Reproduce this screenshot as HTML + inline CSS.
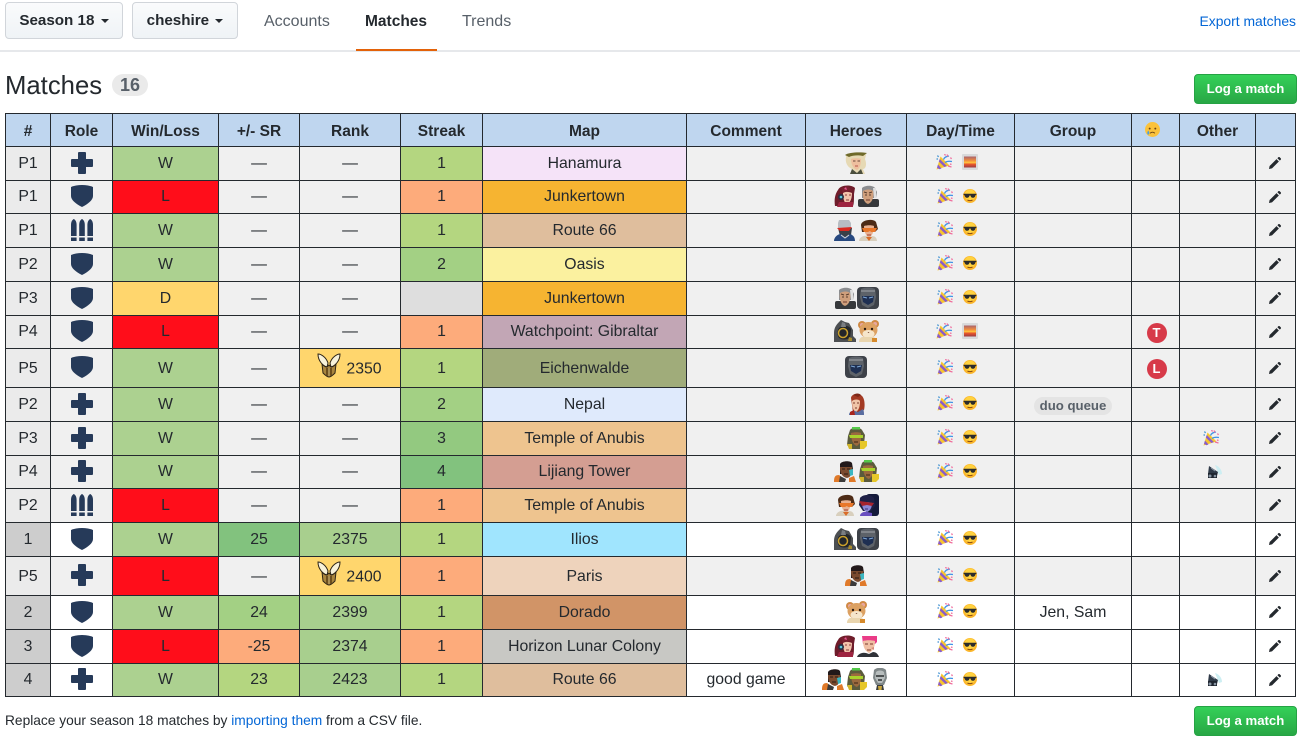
<!DOCTYPE html>
<html><head><meta charset="utf-8"><title>Matches</title>
<style>
*{box-sizing:border-box}
html,body{margin:0;padding:0;background:#fff}
body{width:1300px;height:741px;position:relative;overflow:hidden;font-family:"Liberation Sans",sans-serif;color:#24292e;font-size:16px}
.btn{position:absolute;border:1px solid #d1d5da;border-radius:4px;background:linear-gradient(#fafbfc,#eff3f6);font-weight:700;font-size:15.2px;line-height:36px;text-align:center;color:#24292e;white-space:nowrap}
.caret{display:inline-block;width:0;height:0;border:4.5px solid transparent;border-top:4.5px solid #24292e;border-bottom:0;vertical-align:2px;margin-left:2px}
.tab{position:absolute;top:12.500px;font-size:16px;line-height:18px;color:#586069;white-space:nowrap}
.green{position:absolute;left:1194px;width:103px;height:30px;border-radius:4px;border:1px solid #25a244;background:linear-gradient(#34d058,#28a745);color:#fff;font-weight:700;font-size:13.200px;line-height:28px;text-align:center;white-space:nowrap}
table{position:absolute;left:5px;top:113px;border-collapse:collapse;table-layout:fixed;width:1290px;background:#f0f0f0}
th,td{border:1px solid #24292e;padding:0;text-align:center;vertical-align:middle;font-size:15.800px;line-height:18px;white-space:nowrap;overflow:hidden}
th{background:#bfd6ef;font-weight:700;font-size:15.500px;padding-top:4px}
td{background:#f0f0f0}
tr.r td{background:#fff}
td svg{vertical-align:middle;position:relative}
td:nth-child(2) svg,td:nth-child(9) svg,td:nth-child(10) svg{top:-1px}
td:last-child svg{left:-1px}
tr.t td{padding-top:2px}
tr.t td:nth-child(2) svg{top:-2px}
tr.t td:nth-child(9) svg,tr.t td:nth-child(10) svg{top:-2px}
tr.t td:last-child svg{top:-1px}
td.p{background:#ebebeb!important}
td.n{background:#cdcdcd!important}
.w{background:#acd190!important}
.l{background:#ff0d1a!important}
.d{background:#ffd66d!important}
.s1{background:#b4d680!important}
.s2{background:#a3d084!important}
.s3{background:#93c980!important}
.s4{background:#82c27e!important}
.sl{background:#fdab7b!important}
.sn{background:#dedede!important}
.rg{background:#a8cf8e!important}
.h{margin:0 .5px}
.e{margin:0 5px;left:-3.500px}
tr.t svg.rk{margin-right:4px;top:-4px;left:-1px}
.pill{display:inline-block;background:#e4e4e4;color:#586069;border-radius:10px;font-size:13.200px;font-weight:700;line-height:18px;padding:0 5.500px;position:relative;top:1.500px}
.c{display:inline-block;border-radius:50%;background:#d73a49;color:#fff;font-weight:700;font-size:13px;width:20px;height:20px;line-height:20px;position:relative;top:1px;left:1px}
tr.t .c{top:0}
a{color:#0366d6;text-decoration:none}
</style></head><body>
<svg width="0" height="0" style="position:absolute">
<defs>
<symbol id="cross" viewBox="0 0 22 22"><path d="M8 0h6a1 1 0 0 1 1 1v6h6a1 1 0 0 1 1 1v6a1 1 0 0 1-1 1h-6v6a1 1 0 0 1-1 1H8a1 1 0 0 1-1-1v-6H1a1 1 0 0 1-1-1V8a1 1 0 0 1 1-1h6V1a1 1 0 0 1 1-1z" fill="#263a59"/></symbol>
<symbol id="shield" viewBox="0 0 22 22"><path d="M11 0c4 0 8 .8 11 2v9c0 4-5 8-11 11C5 19 0 15 0 11V2c3-1.200 7-2 11-2z" fill="#263a59"/></symbol>
<symbol id="bullets" viewBox="0 0 22 22"><g fill="#263a59"><path d="M0 6c0-3 1-5 2.800-6C4.600 1 5.600 3 5.600 6v11H0z"/><path d="M8.200 6c0-3 1-5 2.800-6 1.800 1 2.800 3 2.800 6v11H8.200z"/><path d="M16.400 6c0-3 1-5 2.800-6C21 1 22 3 22 6v11h-5.600z"/><rect y="18.500" width="5.600" height="3.500"/><rect x="8.200" y="18.500" width="5.600" height="3.500"/><rect x="16.400" y="18.500" width="5.600" height="3.500"/></g></symbol>
<symbol id="party" viewBox="0 0 16 16"><path d="M0.500 15.500L4.500 2.500l9 9z" fill="#f7c52e"/><path d="M2 10.500l3.500 4-2 .8-2.500-1.500zM3.800 5l7 7-2.400 1-5.600-5.500z" fill="#8a5cc9"/><path d="M7.500 5.500c1-2.500 3-3 5.500-3.500M9 8.500c2-1.500 4.500-1.500 7-1" stroke="#3f93e6" stroke-width="1.300" fill="none"/><path d="M11 .5l1 2M14.500 3.500l1 1.500M12 12l3.500 1M14 10l1.500.5M8.500 0l1 1.500" stroke="#ef6f9f" stroke-width="1.300" fill="none"/><path d="M1.500 1.500l1 1.500M.5 5l1.500 0" stroke="#3d8fd1" stroke-width="1.200"/></symbol>
<symbol id="cool" viewBox="0 0 14 14"><circle cx="7" cy="7" r="7" fill="#fbb62b"/><circle cx="7" cy="6" r="5.500" fill="#ffd23f"/><path d="M.6 4.800h12.800v1.200l-1 .2c-.3 2-1.500 2.600-2.600 2.600-1.500 0-2-1-2.300-2.300h-1C6.200 7.800 5.500 8.800 4.200 8.800 3 8.800 1.800 8 1.500 6.200l-.9-.2z" fill="#2b2b2b"/><path d="M4.500 11c1.500.8 3.500.8 5 0" stroke="#8a4b10" stroke-width="1" fill="none"/></symbol>
<symbol id="sunset" viewBox="0 0 16 16"><defs><linearGradient id="sg" x1="0" y1="0" x2="0" y2="1"><stop offset="0" stop-color="#a9626d"/><stop offset=".4" stop-color="#f5923b"/><stop offset=".55" stop-color="#ffc93f"/><stop offset=".7" stop-color="#e9572c"/><stop offset="1" stop-color="#9a3b44"/></linearGradient></defs><rect width="16" height="16" rx="1" fill="#d9dadb"/><rect x="2" y="2.500" width="12" height="11" fill="url(#sg)"/></symbol>
<symbol id="pencil" viewBox="0 0 12 12"><path d="M0 12l.6-3L7.500 2.100l2.400 2.400L3 11.400zM8.400 1.200L9.300.3a1 1 0 0 1 1.400 0l1 1a1 1 0 0 1 0 1.400l-.9.900z" fill="#24292e"/></symbol>
<symbol id="rank" viewBox="0 0 24 25"><path d="M1 1c3 0 8 3 10 9l-1 4C6 13 1 8 1 1zM23 1c-3 0-8 3-10 9l1 4c4-1 9-6 9-13z" fill="#f8f2da" stroke="#2d2416"/><path d="M5 11c2 2 4 3 5 3l2-2 2 2c1 0 3-1 5-3l-1 9c-2 2-4 4-6 4s-4-2-6-4z" fill="#a9853e" stroke="#2d2416"/><path d="M9 15h6v7c-1 1-2 1-3 1s-2 0-3-1z" fill="#6d4f1e"/><path d="M12 15v8" stroke="#e8cf8c"/></symbol>
<symbol id="cry" viewBox="0 0 16 16"><circle cx="8" cy="8" r="8" fill="#fbc23b"/><circle cx="5" cy="7" r="1" fill="#6b4415"/><circle cx="11" cy="7" r="1" fill="#6b4415"/><path d="M5.500 12c1.500-1.500 3.500-1.500 5 0" stroke="#6b4415" fill="none"/><path d="M3.500 9c-1.500 2-1.500 4 0 4.500 1.500-.5 1.500-2.500 0-4.500z" fill="#4a9fe0"/></symbol>
<symbol id="horn" viewBox="0 0 16 14"><path d="M8 0c4 1 7 5 7 9l-3 1z" fill="#cdeef2"/><path d="M2 1l9 6-1 4-6 1-3-3z" fill="#2f3a48"/><path d="M1 8h9v5H1z" fill="#1f2630"/><circle cx="3" cy="11" r="1.500" fill="#8895a3"/><circle cx="8" cy="11" r="1.300" fill="#8895a3"/><path d="M4 3l4 3" stroke="#8895a3"/></symbol>
<symbol id="mercy" viewBox="0 0 22 22"><path d="M1 5c0-4 6-4 10-4 4 0 10 0 10 2l-1 4c2 5 1 10-2 10l2 5H5l2-5C2 15 0 10 1 5z" fill="#e6d9b4"/><path d="M0 3c4-3 16-3 22-2l-4 3C14 3 8 3 4 5z" fill="#6f6a2a"/><path d="M6 7c3-1 8-1 10 0 0 5-1 9-4 11-3-1-6-5-6-11z" fill="#eebf9e"/><path d="M8 9h2.500M12.500 9H15" stroke="#6a4a3a"/><path d="M10 14h3" stroke="#b5544a"/><path d="M7 17l5 4 4-4 2 5H5z" fill="#4b4f3e"/></symbol>
<symbol id="dva" viewBox="0 0 22 22"><path d="M4 5c2-5 13-6 17-2l-1 6c0 6 0 10-1 12H1c-1-6 0-12 3-16z" fill="#6e1c2a"/><path d="M9 8c3-2 7-1 9 0 0 6-2 10-5 11-3-1-4-6-4-11z" fill="#f1c3ac"/><path d="M7 3l7-2 4 5c-4-1-8 0-9 2z" fill="#7b1f30"/><circle cx="7" cy="12" r="3" fill="#273043"/><circle cx="7" cy="12" r="1.300" fill="#5ec8dc"/><path d="M10 4l2-2 1 3z" fill="#e8568f"/><path d="M11 10h2M15 10h2M12 15h3" stroke="#8a3a3a"/><path d="M5 17h14v5H3z" fill="#9e2440"/></symbol>
<symbol id="old" viewBox="0 0 22 22"><rect x="1" y="14" width="21" height="8" rx="2" fill="#36383b"/><path d="M5 3c3-3 11-3 13 0l2 4-1 6H5z" fill="#8b8d90"/><path d="M6 6c3-2 8-2 10 0 1 5 0 11-5 13-4-1-6-7-5-13z" fill="#cf9f7c"/><path d="M7 7l3 1M12 8l3-1M8 10h2M12 10h2" stroke="#5a3d2c"/><path d="M9 15h4" stroke="#6e3a2c"/><path d="M16 3h3v10h-2z" fill="#e0e0e0"/></symbol>
<symbol id="soldier" viewBox="0 0 22 22"><path d="M5 1h10l2 3v6H4V4z" fill="#b7bcc2"/><path d="M4 9h14l-1 7-6 3-5-2z" fill="#3a4048"/><path d="M3 9l15-1-3 4H6z" fill="#d8291f"/><path d="M0 22c0-4 4-7 7-7l4 3 5-3c3 1 5 3 5 7z" fill="#26487f"/><path d="M7 16l4 3 4-3" stroke="#d8d8d8" fill="none"/></symbol>
<symbol id="tracer" viewBox="0 0 22 22"><path d="M4 6c0-5 12-7 15-3l2 7-3 3H5z" fill="#4d2b16"/><path d="M7 7c3-1 8-1 10 0 0 6-2 10-5 12-3-2-5-6-5-12z" fill="#e8b090"/><path d="M5 9h15l-2 4h-4l-1-1-2 1H7z" fill="#e9772a"/><path d="M10 16h4" stroke="#a03f36"/><path d="M2 22c0-3 4-6 8-5l2 2 3-2c3 0 5 2 5 5z" fill="#d8cfbd"/><path d="M9 18l3 4 3-4" fill="#d96c28"/></symbol>
<symbol id="hog" viewBox="0 0 22 22"><path d="M7 0l4 2 4 1 4 7v6l3 3v3H0v-9c0-6 3-9 7-13z" fill="#4c4f52"/><path d="M5 8c4-3 10-3 12 1l-1 9c-4 2-8 2-11 0-2-3-2-7 0-10z" fill="#23262a"/><circle cx="9" cy="13" r="4.500" fill="none" stroke="#c9a02c" stroke-width="1.500"/><path d="M15 17l3 1v3h-4z" fill="#a88b2c"/><path d="M8 2l3 1 1 4H7z" fill="#7a7e82"/></symbol>
<symbol id="ham" viewBox="0 0 22 22"><circle cx="5" cy="5" r="4" fill="#d08a45"/><circle cx="18" cy="4" r="4" fill="#d08a45"/><circle cx="5" cy="5" r="2" fill="#e8a7a0"/><circle cx="18" cy="4" r="2" fill="#e8a7a0"/><ellipse cx="11.500" cy="10" rx="9" ry="8" fill="#dca162"/><ellipse cx="11.500" cy="14" rx="6" ry="4" fill="#f6e6cb"/><circle cx="8" cy="9" r="1.200" fill="#2a1a10"/><circle cx="15" cy="9" r="1.200" fill="#2a1a10"/><path d="M10.500 12h2l-1 1z" fill="#6a3a2a"/><path d="M2 22c0-4 3-6 6-5h7c3 0 5 2 5 5z" fill="#e9d5ae"/><path d="M15 18h5v4h-5z" fill="#d68a2c"/></symbol>
<symbol id="orisa" viewBox="0 0 22 22"><rect width="22" height="22" rx="4" fill="#3d4148"/><path d="M4 2c4-2 10-2 14 0l1 8-2 8-6 3-6-3-2-8z" fill="#5d6269"/><path d="M5 9h12l-1 6-5 3-5-3z" fill="#1e2f52"/><path d="M6 10l4 1M12 11l4-1" stroke="#7fa9d8"/><path d="M4 4h14" stroke="#a3a7ac"/></symbol>
<symbol id="brig" viewBox="0 0 22 22"><path d="M6 5c0-4 8-6 11-2 3 3 3 10 2 14l-3 2H8z" fill="#a33a24"/><path d="M8 2c3-2 6-2 8 0l-3 2z" fill="#7d2818"/><path d="M7 8c2-2 7-2 8 0 0 5-1 9-4 11-3-1-4-6-4-11z" fill="#f0c4a8"/><path d="M8 10h2M12 10h2M10 15h2" stroke="#7a3a2c"/><path d="M4 22c0-3 3-5 6-4l3 1 5-3c1 2 1 4 1 6z" fill="#5a6da0"/><path d="M5 19l4-2 1 5H5z" fill="#a8241c"/></symbol>
<symbol id="lucio" viewBox="0 0 22 22"><path d="M5 3c2-3 10-3 12 0l3 5-1 9-4 5H6l-4-4 1-9z" fill="#5b5b3c"/><path d="M7 0h8v2.500H7z" fill="#53c94a"/><path d="M6 6c3-1 8-1 10 0v9l-4 4c-4-1-6-6-6-13z" fill="#9b6a3e"/><path d="M4 8h14v3H5z" fill="#a9d22c"/><path d="M9 15h4" stroke="#3d2414"/><path d="M15 14h7v5l-3 3h-4z" fill="#e6c72a"/><path d="M2 17h5v5H4z" fill="#d2b62a"/></symbol>
<symbol id="bap" viewBox="0 0 22 22"><path d="M6 4c1-3 10-4 12-1l1 6-1 5H6z" fill="#22191a"/><path d="M6 7h12c1 6-1 10-5 11-5-1-7-5-7-11z" fill="#7a4a2e"/><path d="M8 9h3M13 9h3M10 14h4" stroke="#2a1a12"/><path d="M15 10l4-1v6l-3 1z" fill="#3bb7c2"/><path d="M0 22c0-5 1-7 5-7l4 3v4zM15 18l5-2 2 6h-7z" fill="#e07a2a"/><path d="M6 16l6 3-1 3H5z" fill="#3b3b3b"/></symbol>
<symbol id="widow" viewBox="0 0 22 22"><rect x="9" width="13" height="22" rx="3" fill="#141a3a"/><path d="M3 4c3-4 11-4 14 0l1 8-4 5H6l-4-6z" fill="#1e2046"/><path d="M5 9c3-1 8-1 10 0 0 5-2 8-5 9-3-1-5-4-5-9z" fill="#8a87d6"/><path d="M2 7l15 2-2 3-5-1-5 1z" fill="#a6232e"/><path d="M8 15h3" stroke="#3d2c7a"/><path d="M3 22c0-3 4-5 7-4l5 1v3z" fill="#6a4fc0"/></symbol>
<symbol id="zarya" viewBox="0 0 22 22"><path d="M5 1h15v6l-2 2H6z" fill="#ea3c87"/><path d="M6 6c3-1 9-1 12 0 0 6-2 10-6 12-4-2-6-6-6-12z" fill="#efbfa3"/><path d="M8 9h3M13 9h3M10 15h4" stroke="#7a3a2c"/><path d="M14 13l3-1v3z" fill="#d38a7a"/><path d="M0 22c1-3 5-5 9-4l3 1 4-2c3 0 5 2 6 5z" fill="#2f3238"/></symbol>
<symbol id="zen" viewBox="0 0 22 22"><path d="M6 2c3-3 9-3 12 0l1 8-3 7H8l-3-7z" fill="#7f8788"/><path d="M8 4c2-2 6-2 8 0l1 6-3 5h-4l-3-5z" fill="#b7bdbd"/><path d="M8 8h8M10 12h4" stroke="#2b2f30" stroke-width="1.500"/><path d="M9 17h6l1 5H8z" fill="#3a3d3e"/><path d="M10 18h4l-.5 4h-3z" fill="#c9a53a"/></symbol>
</defs></svg>

<div class="btn" style="left:5px;top:2px;width:118px;height:37px">Season 18 <span class="caret"></span></div>
<div class="btn" style="left:132px;top:2px;width:106px;height:37px">cheshire <span class="caret"></span></div>
<div class="tab" style="left:264px">Accounts</div>
<div class="tab" style="left:365px;color:#24292e;font-weight:700;font-size:15.500px">Matches</div>
<div class="tab" style="left:462px">Trends</div>
<div style="position:absolute;left:0;top:50px;width:1300px;height:2px;background:#e6e8eb"></div>
<div style="position:absolute;left:356px;top:49px;width:81px;height:2px;background:#e36209"></div>
<a href="#" style="position:absolute;right:4px;top:12px;font-size:13.900px;line-height:18px">Export matches</a>
<div style="position:absolute;left:5px;top:69px;font-size:25.700px;line-height:34px;font-weight:400">Matches</div>
<div style="position:absolute;left:112px;top:74px;width:36px;height:22px;border-radius:11px;background:#eaeaea;color:#586069;font-weight:700;font-size:18px;line-height:22px;text-align:center">16</div>
<div class="green" style="top:74px">Log a match</div>

<table>
<colgroup><col style="width:45px"><col style="width:62px"><col style="width:106px"><col style="width:81px"><col style="width:101px"><col style="width:82px"><col style="width:204px"><col style="width:119px"><col style="width:101px"><col style="width:108px"><col style="width:117px"><col style="width:48px"><col style="width:76px"><col style="width:40px"></colgroup>
<tr style="height:33px"><th>#</th><th>Role</th><th>Win/Loss</th><th>+/- SR</th><th>Rank</th><th>Streak</th><th>Map</th><th>Comment</th><th>Heroes</th><th>Day/Time</th><th>Group</th><th><svg width="15" height="15" style="margin-right:6px"><use href="#cry"/></svg></th><th>Other</th><th></th></tr>

<tr style="height:34px"><td class="p">P1</td><td><svg width="22" height="22"><use href="#cross"/></svg></td><td class="w">W</td><td>—</td><td>—</td><td class="s1">1</td><td style="background:#f5e3f8">Hanamura</td><td></td><td><svg class="h" width="22" height="22"><use href="#mercy"/></svg></td><td><svg class="e" width="16" height="16"><use href="#party"/></svg><svg class="e" width="16" height="16"><use href="#sunset"/></svg></td><td></td><td></td><td></td><td><svg width="12" height="12"><use href="#pencil"/></svg></td></tr>

<tr style="height:33px"><td class="p">P1</td><td><svg width="22" height="22"><use href="#shield"/></svg></td><td class="l">L</td><td>—</td><td>—</td><td class="sl">1</td><td style="background:#f6b431">Junkertown</td><td></td><td><svg class="h" width="22" height="22"><use href="#dva"/></svg><svg class="h" width="22" height="22"><use href="#old"/></svg></td><td><svg class="e" width="16" height="16"><use href="#party"/></svg><svg class="e" width="14" height="14"><use href="#cool"/></svg></td><td></td><td></td><td></td><td><svg width="12" height="12"><use href="#pencil"/></svg></td></tr>

<tr style="height:34px"><td class="p">P1</td><td><svg width="22" height="22"><use href="#bullets"/></svg></td><td class="w">W</td><td>—</td><td>—</td><td class="s1">1</td><td style="background:#dfbe9d">Route 66</td><td></td><td><svg class="h" width="22" height="22"><use href="#soldier"/></svg><svg class="h" width="22" height="22"><use href="#tracer"/></svg></td><td><svg class="e" width="16" height="16"><use href="#party"/></svg><svg class="e" width="14" height="14"><use href="#cool"/></svg></td><td></td><td></td><td></td><td><svg width="12" height="12"><use href="#pencil"/></svg></td></tr>

<tr style="height:34px"><td class="p">P2</td><td><svg width="22" height="22"><use href="#shield"/></svg></td><td class="w">W</td><td>—</td><td>—</td><td class="s2">2</td><td style="background:#fbf19f">Oasis</td><td></td><td></td><td><svg class="e" width="16" height="16"><use href="#party"/></svg><svg class="e" width="14" height="14"><use href="#cool"/></svg></td><td></td><td></td><td></td><td><svg width="12" height="12"><use href="#pencil"/></svg></td></tr>

<tr style="height:34px"><td class="p">P3</td><td><svg width="22" height="22"><use href="#shield"/></svg></td><td class="d">D</td><td>—</td><td>—</td><td class="sn"></td><td style="background:#f6b431">Junkertown</td><td></td><td><svg class="h" width="22" height="22"><use href="#old"/></svg><svg class="h" width="22" height="22"><use href="#orisa"/></svg></td><td><svg class="e" width="16" height="16"><use href="#party"/></svg><svg class="e" width="14" height="14"><use href="#cool"/></svg></td><td></td><td></td><td></td><td><svg width="12" height="12"><use href="#pencil"/></svg></td></tr>

<tr style="height:33px"><td class="p">P4</td><td><svg width="22" height="22"><use href="#shield"/></svg></td><td class="l">L</td><td>—</td><td>—</td><td class="sl">1</td><td style="background:#c2a6b5">Watchpoint: Gibraltar</td><td></td><td><svg class="h" width="22" height="22"><use href="#hog"/></svg><svg class="h" width="22" height="22"><use href="#ham"/></svg></td><td><svg class="e" width="16" height="16"><use href="#party"/></svg><svg class="e" width="16" height="16"><use href="#sunset"/></svg></td><td></td><td><span class="c">T</span></td><td></td><td><svg width="12" height="12"><use href="#pencil"/></svg></td></tr>

<tr class="t" style="height:39px"><td class="p">P5</td><td><svg width="22" height="22"><use href="#shield"/></svg></td><td class="w">W</td><td>—</td><td class="d"><svg class="rk" width="24" height="25"><use href="#rank"/></svg>2350</td><td class="s1">1</td><td style="background:#a0ac7a">Eichenwalde</td><td></td><td><svg class="h" width="22" height="22"><use href="#orisa"/></svg></td><td><svg class="e" width="16" height="16"><use href="#party"/></svg><svg class="e" width="14" height="14"><use href="#cool"/></svg></td><td></td><td><span class="c">L</span></td><td></td><td><svg width="12" height="12"><use href="#pencil"/></svg></td></tr>

<tr style="height:34px"><td class="p">P2</td><td><svg width="22" height="22"><use href="#cross"/></svg></td><td class="w">W</td><td>—</td><td>—</td><td class="s2">2</td><td style="background:#dfeafc">Nepal</td><td></td><td><svg class="h" width="22" height="22"><use href="#brig"/></svg></td><td><svg class="e" width="16" height="16"><use href="#party"/></svg><svg class="e" width="14" height="14"><use href="#cool"/></svg></td><td><span class="pill">duo queue</span></td><td></td><td></td><td><svg width="12" height="12"><use href="#pencil"/></svg></td></tr>

<tr style="height:34px"><td class="p">P3</td><td><svg width="22" height="22"><use href="#cross"/></svg></td><td class="w">W</td><td>—</td><td>—</td><td class="s3">3</td><td style="background:#eec48f">Temple of Anubis</td><td></td><td><svg class="h" width="22" height="22"><use href="#lucio"/></svg></td><td><svg class="e" width="16" height="16"><use href="#party"/></svg><svg class="e" width="14" height="14"><use href="#cool"/></svg></td><td></td><td></td><td><svg width="16" height="16" style="margin-right:14px"><use href="#party"/></svg></td><td><svg width="12" height="12"><use href="#pencil"/></svg></td></tr>

<tr style="height:33px"><td class="p">P4</td><td><svg width="22" height="22"><use href="#cross"/></svg></td><td class="w">W</td><td>—</td><td>—</td><td class="s4">4</td><td style="background:#d49e92">Lijiang Tower</td><td></td><td><svg class="h" width="22" height="22"><use href="#bap"/></svg><svg class="h" width="22" height="22"><use href="#lucio"/></svg></td><td><svg class="e" width="16" height="16"><use href="#party"/></svg><svg class="e" width="14" height="14"><use href="#cool"/></svg></td><td></td><td></td><td><svg width="16" height="14" style="margin-right:6px"><use href="#horn"/></svg></td><td><svg width="12" height="12"><use href="#pencil"/></svg></td></tr>

<tr style="height:34px"><td class="p">P2</td><td><svg width="22" height="22"><use href="#bullets"/></svg></td><td class="l">L</td><td>—</td><td>—</td><td class="sl">1</td><td style="background:#eec48f">Temple of Anubis</td><td></td><td><svg class="h" width="22" height="22"><use href="#tracer"/></svg><svg class="h" width="22" height="22"><use href="#widow"/></svg></td><td></td><td></td><td></td><td></td><td><svg width="12" height="12"><use href="#pencil"/></svg></td></tr>

<tr class="r" style="height:34px"><td class="n">1</td><td><svg width="22" height="22"><use href="#shield"/></svg></td><td class="w">W</td><td class="s4">25</td><td class="rg">2375</td><td class="s1">1</td><td style="background:#a0e5fe!important">Ilios</td><td></td><td><svg class="h" width="22" height="22"><use href="#hog"/></svg><svg class="h" width="22" height="22"><use href="#orisa"/></svg></td><td><svg class="e" width="16" height="16"><use href="#party"/></svg><svg class="e" width="14" height="14"><use href="#cool"/></svg></td><td></td><td></td><td></td><td><svg width="12" height="12"><use href="#pencil"/></svg></td></tr>

<tr class="t" style="height:39px"><td class="p">P5</td><td><svg width="22" height="22"><use href="#cross"/></svg></td><td class="l">L</td><td>—</td><td class="d"><svg class="rk" width="24" height="25"><use href="#rank"/></svg>2400</td><td class="sl">1</td><td style="background:#eed3bc">Paris</td><td></td><td><svg class="h" width="22" height="22"><use href="#bap"/></svg></td><td><svg class="e" width="16" height="16"><use href="#party"/></svg><svg class="e" width="14" height="14"><use href="#cool"/></svg></td><td></td><td></td><td></td><td><svg width="12" height="12"><use href="#pencil"/></svg></td></tr>

<tr class="r" style="height:34px"><td class="n">2</td><td><svg width="22" height="22"><use href="#shield"/></svg></td><td class="w">W</td><td class="s2">24</td><td class="rg">2399</td><td class="s1">1</td><td style="background:#d19467!important">Dorado</td><td></td><td><svg class="h" width="22" height="22"><use href="#ham"/></svg></td><td><svg class="e" width="16" height="16"><use href="#party"/></svg><svg class="e" width="14" height="14"><use href="#cool"/></svg></td><td>Jen, Sam</td><td></td><td></td><td><svg width="12" height="12"><use href="#pencil"/></svg></td></tr>

<tr class="r" style="height:34px"><td class="n">3</td><td><svg width="22" height="22"><use href="#shield"/></svg></td><td class="l">L</td><td class="sl">-25</td><td class="rg">2374</td><td class="sl">1</td><td style="background:#c8c8c4!important">Horizon Lunar Colony</td><td></td><td><svg class="h" width="22" height="22"><use href="#dva"/></svg><svg class="h" width="22" height="22"><use href="#zarya"/></svg></td><td><svg class="e" width="16" height="16"><use href="#party"/></svg><svg class="e" width="14" height="14"><use href="#cool"/></svg></td><td></td><td></td><td></td><td><svg width="12" height="12"><use href="#pencil"/></svg></td></tr>

<tr class="r" style="height:33px"><td class="n">4</td><td><svg width="22" height="22"><use href="#cross"/></svg></td><td class="w">W</td><td class="s1">23</td><td class="rg">2423</td><td class="s1">1</td><td style="background:#dfbe9d!important">Route 66</td><td>good game</td><td><svg class="h" width="22" height="22"><use href="#bap"/></svg><svg class="h" width="22" height="22"><use href="#lucio"/></svg><svg class="h" width="22" height="22"><use href="#zen"/></svg></td><td><svg class="e" width="16" height="16"><use href="#party"/></svg><svg class="e" width="14" height="14"><use href="#cool"/></svg></td><td></td><td></td><td><svg width="16" height="14" style="margin-right:6px"><use href="#horn"/></svg></td><td><svg width="12" height="12"><use href="#pencil"/></svg></td></tr>
</table>

<div style="position:absolute;left:5px;top:711.500px;font-size:13.750px;line-height:18px;white-space:nowrap">Replace your season 18 matches by <a href="#">importing them</a> from a CSV file.</div>
<div class="green" style="top:706px">Log a match</div>
</body></html>
